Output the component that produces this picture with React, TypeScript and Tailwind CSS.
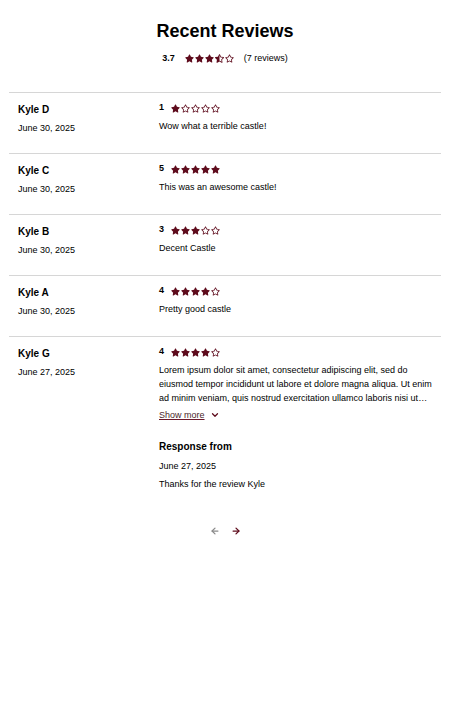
import { FaStar, FaRegStar, FaStarHalfAlt } from "react-icons/fa";
import { ArrowLeft, ArrowRight, ChevronDown } from "lucide-react";

const reviews = [
  { id: 1, name: "Kyle D", date: "June 30, 2025", rating: 1, text: "Wow what a terrible castle!" },
  { id: 2, name: "Kyle C", date: "June 30, 2025", rating: 5, text: "This was an awesome castle!" },
  { id: 3, name: "Kyle B", date: "June 30, 2025", rating: 3, text: "Decent Castle" },
  { id: 4, name: "Kyle A", date: "June 30, 2025", rating: 4, text: "Pretty good castle" },
  {
    id: 5,
    name: "Kyle G",
    date: "June 27, 2025",
    rating: 4,
    text: "Lorem ipsum dolor sit amet, consectetur adipiscing elit, sed do eiusmod tempor incididunt ut labore et dolore magna aliqua. Ut enim ad minim veniam, quis nostrud exercitation ullamco laboris nisi ut aliquip ex ea commodo consequat.",
    long: true,
    response: { date: "June 27, 2025", text: "Thanks for the review Kyle" }
  }
];

const Stars = ({ value }: { value: number }) => {
  return (
    <div className="flex items-center gap-[1px] text-[#5e0b1c]">
      {[1, 2, 3, 4, 5].map(i => {
        if (value >= i) return <FaStar key={i} className="w-[9px] h-[9px]" />;
        if (value >= i - 0.5) return <FaStarHalfAlt key={i} className="w-[9px] h-[9px]" />;
        return <FaRegStar key={i} className="w-[9px] h-[9px]" />;
      })}
    </div>
  );
};

export default function App() {
  return (
    <div className="min-h-[720px] bg-white px-[9px] text-black" style={{ fontFamily: '"Liberation Sans", Arial, sans-serif' }}>
      <h1 className="pt-[17px] text-center text-[18px] leading-[28px] font-bold">Recent Reviews</h1>

      <div className="mt-[6px] mb-[27px] flex items-center justify-center text-[9px] leading-[14px]">
        <span className="font-bold mr-[10px]">3.7</span>
        <Stars value={3.5} />
        <span className="ml-[10px]">(7 reviews)</span>
      </div>

      {/* Review list */}
      <div>
        {reviews.map(r => (
          <div key={r.id} className="grid grid-cols-3 border-t border-[#d6d6d6] pl-[9px] pt-2 pb-[18px]">
            <div>
              <div className="text-[10px] leading-[18px] font-bold">{r.name}</div>
              <div className="mt-[2px] text-[9px] leading-[14px]">{r.date}</div>
            </div>
            <div className="col-span-2 pr-[9px]">
              <div className="mt-[1px] flex items-center gap-[7px] h-[12px]">
                <span className="text-[9px] font-bold">{r.rating}</span>
                <Stars value={r.rating} />
              </div>
              <p className={`mt-[5px] text-[9px] leading-[14px] ${r.long ? "line-clamp-3" : ""}`}>{r.text}</p>
              {r.long && (
                <button className="mt-[3px] flex items-center gap-[5px] text-[9px] leading-[14px] text-[#4a1f2b]">
                  <span className="underline decoration-[#6b1a2b]">Show more</span>
                  <ChevronDown className="w-[10px] h-[10px] text-[#5e0b1c]" strokeWidth={3} />
                </button>
              )}
              {r.response && (
                <div className="mt-[18px]">
                  <div className="text-[10px] leading-[14px] font-bold">Response from</div>
                  <div className="mt-[5px] text-[9px] leading-[14px]">{r.response.date}</div>
                  <div className="mt-[4px] text-[9px] leading-[14px]">{r.response.text}</div>
                </div>
              )}
            </div>
          </div>
        ))}
      </div>

      <div className="mt-[17px] flex items-center justify-center gap-[11px]">
        <ArrowLeft className="w-[10px] h-[10px] text-[#8a8a8a]" strokeWidth={3} />
        <ArrowRight className="w-[10px] h-[10px] text-[#5e0b1c]" strokeWidth={3} />
      </div>
    </div>
  );
}
